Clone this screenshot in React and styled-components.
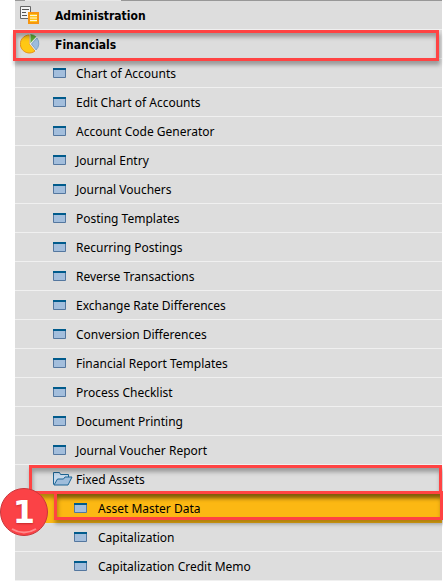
import React from 'react';
import styled, { createGlobalStyle, css } from 'styled-components';

const GlobalStyle = createGlobalStyle`
    *,
    *::before,
    *::after {
        box-sizing: border-box;
    }

    body {
        margin: 0;
        background: #ffffff;
        font-family: 'Noto Sans', sans-serif;
        font-size: 12px;
        color: #000000;
    }
`;

const Page = styled.main`
    padding: 0 1px 0 15px;
`;

const TabEdge = styled.div`
    display: flex;
    height: 1px;
    background: #979797;
`;

const ActiveTabEdge = styled.div`
    width: 96px;
    margin-left: 10px;
    height: 1px;
    background: #e8e8e8;
`;

const Menu = styled.ul`
    margin: 0;
    padding: 0;
    list-style: none;
`;

const Item = styled.li`
    position: relative;
`;

const indents = {
    module: 5,
    entry: 38,
    nested: 59
};

const slots = {
    module: 35,
    entry: 23,
    nested: 24
};

const Row = styled.button`
    display: flex;
    align-items: center;
    width: 100%;
    height: 29px;
    padding: 0 8px 0 ${({ $level }) => indents[$level]}px;
    border: 0;
    border-bottom: 1px solid #f0f0f0;
    background: #dddddd;
    color: inherit;
    font: inherit;
    text-align: left;
    white-space: nowrap;
    cursor: pointer;

    ${({ $level }) =>
        $level === 'module' &&
        css`
            font-family: 'DejaVu Sans Condensed', 'DejaVu Sans', sans-serif;
            font-weight: bold;
        `}

    ${({ $selected }) =>
        $selected &&
        css`
            background: #fcb813;
            border-bottom-color: #fcb813;
        `}
`;

const IconSlot = styled.span`
    display: flex;
    flex: none;
    width: ${({ $level }) => slots[$level]}px;
`;

const Label = styled.span`
    padding-top: 2px;
    line-height: 16px;
`;

const outlines = {
    module: css`
        inset: 0 3px -2px -2px;
    `,
    folder: css`
        inset: 0 0 0 14px;
    `,
    selected: css`
        inset: -3px -1px 3px 39px;
    `
};

const Outline = styled.span`
    position: absolute;
    z-index: 1;
    ${({ $kind }) => outlines[$kind]}
    border: 3px solid #ff4343;
    box-shadow:
        1px 4px 4px rgba(0, 0, 0, 0.3),
        inset 1px 4px 4px rgba(0, 0, 0, 0.3);
    pointer-events: none;
`;

const StepBadge = styled.span`
    position: absolute;
    z-index: 2;
    top: -6px;
    left: -15px;
    display: flex;
    align-items: center;
    justify-content: center;
    width: 48px;
    height: 48px;
    border: 1px solid #c9363b;
    border-radius: 50%;
    background: #fb4246;
    color: #ffffff;
    font-family: 'DejaVu Sans', sans-serif;
    font-size: 32px;
    font-weight: bold;
    line-height: 48px;
    text-shadow: 0 1px 2px rgba(120, 0, 0, 0.4);
    pointer-events: none;
`;

const BadgeShine = styled.svg`
    position: absolute;
    inset: 0;
`;

const AdministrationIcon = () => (
    <svg width="20" height="18" viewBox="0 0 20 18" aria-hidden="true">
        <path d="M.5.5h10v12H.5z" fill="#f4f4f4" stroke="#666666" />
        <path d="M2 3.5h7M2 6.5h4M2 9.5h5" stroke="#555555" />
        <path d="M9 7h9v10H9z" fill="#ffc61a" stroke="#f7960f" strokeWidth="2" />
        <path d="M10 9.500h7M10 12h7M10 14.500h7" stroke="#fff6d8" />
    </svg>
);

const FinancialsIcon = () => (
    <svg width="20" height="20" viewBox="0 0 20 20" aria-hidden="true">
        <path d="M9.500 10V1a9 9 0 1 0 5.500 16Z" fill="#ffc814" stroke="#e8951a" />
        <path d="M10.500 9V.500a9 9 0 0 1 5.500 2.300Z" fill="#5fae35" stroke="#4c9a2a" strokeWidth=".6" />
        <path d="M11.500 10l5.500-6a9 9 0 0 1-1 12Z" fill="#9dbcdc" stroke="#6f97bd" strokeWidth=".8" />
        <path d="M10 .500v9.500l6.500-7M10 10l6 7" fill="none" stroke="#eeeeee" strokeWidth=".8" />
    </svg>
);

const WindowIcon = () => (
    <svg width="13" height="10" viewBox="0 0 13 10" aria-hidden="true">
        <path d="M.5.5h12v9H.5z" fill="#a3bedc" stroke="#54779f" />
        <path d="M0 0h13v2H0z" fill="#005b8c" />
    </svg>
);

const FolderIcon = () => (
    <svg width="20" height="14" viewBox="0 0 20 14" aria-hidden="true">
        <path d="M.5 12.500V.5h6l1 2h8v3" fill="#c6d9ec" stroke="#1d6595" />
        <path d="M1 13l3.500-6h6l1.500-2h7l-4 8H1Z" fill="#9fbddb" stroke="#1d6595" />
    </svg>
);

const icons = {
    administration: AdministrationIcon,
    financials: FinancialsIcon,
    window: WindowIcon,
    folder: FolderIcon
};

const items = [
    { label: 'Administration', level: 'module', icon: 'administration' },
    { label: 'Financials', level: 'module', icon: 'financials', outline: 'module' },
    { label: 'Chart of Accounts' },
    { label: 'Edit Chart of Accounts' },
    { label: 'Account Code Generator' },
    { label: 'Journal Entry' },
    { label: 'Journal Vouchers' },
    { label: 'Posting Templates' },
    { label: 'Recurring Postings' },
    { label: 'Reverse Transactions' },
    { label: 'Exchange Rate Differences' },
    { label: 'Conversion Differences' },
    { label: 'Financial Report Templates' },
    { label: 'Process Checklist' },
    { label: 'Document Printing' },
    { label: 'Journal Voucher Report' },
    { label: 'Fixed Assets', icon: 'folder', outline: 'folder' },
    { label: 'Asset Master Data', level: 'nested', outline: 'selected', step: 1 },
    { label: 'Capitalization', level: 'nested' },
    { label: 'Capitalization Credit Memo', level: 'nested' }
];

const MenuItem = ({ label, level = 'entry', icon = 'window', outline, step }) => {
    const Icon = icons[icon];

    return (
        <Item>
            <Row type="button" $level={level} $selected={outline === 'selected'}>
                <IconSlot $level={level}>
                    <Icon />
                </IconSlot>
                <Label>{label}</Label>
            </Row>
            {outline && <Outline $kind={outline} />}
            {step && (
                <StepBadge>
                    <BadgeShine width="46" height="46" viewBox="0 0 46 46" aria-hidden="true">
                        <path d="M11 40q12 7 24 0" fill="none" stroke="#ff8b8d" strokeWidth="2" />
                    </BadgeShine>
                    {step}
                </StepBadge>
            )}
        </Item>
    );
};

const App = () => (
    <>
        <GlobalStyle />
        <Page>
            <TabEdge>
                <ActiveTabEdge />
            </TabEdge>
            <Menu>
                {items.map(item => (
                    <MenuItem key={item.label} {...item} />
                ))}
            </Menu>
        </Page>
    </>
);

export default App;
